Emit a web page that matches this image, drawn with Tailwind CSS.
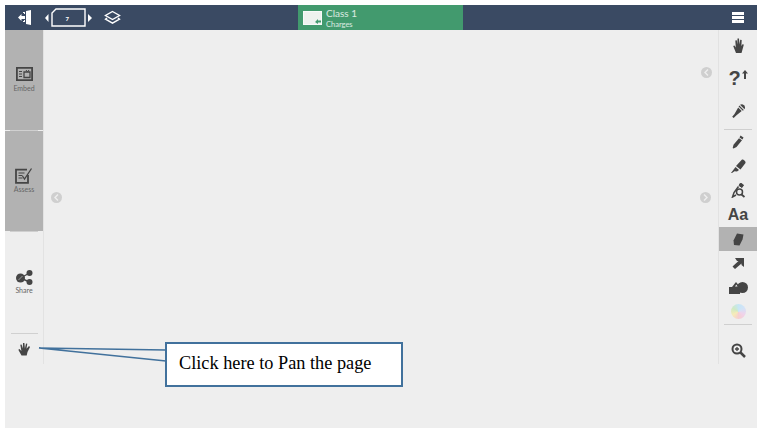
<!DOCTYPE html>
<html>
<head>
    <meta charset="utf-8">
    <script src="https://cdn.jsdelivr.net/npm/@tailwindcss/browser@4"></script>
</head>
<body class="bg-white">
    <div class="relative w-[763px] h-[436px] pt-[5px] pl-[5px] pr-[6px] pb-[8px] overflow-hidden font-['Lato','Noto_Sans',sans-serif]">
        <div class="flex flex-col h-full bg-[#eeeeee]">
            <!-- top bar -->
            <div class="flex items-center h-[25px] bg-[#3a4a63] shrink-0 relative">
                <svg class="ml-[13px] w-[14px] h-[15px]" viewBox="0 0 14 15" fill="#fff">
                    <path d="M8 1l5-1v15l-5-1z"/>
                    <path d="M0 7.500l3.500-3.500v2H7v3H3.500v2z"/>
                    <path d="M5 2h2v2H6v-1H5zM5 12h2v-2H6v1H5z"/>
                </svg>
                <svg class="ml-[13px] w-[47px] h-[20px] mt-[1px]" viewBox="0 0 47 20">
                    <path d="M0 10l3.500-4v8z" fill="#fff"/>
                    <path d="M11 1h29v17H7V5z" fill="none" stroke="#fff" stroke-width="1.400"/>
                    <path d="M43 6l4 4-4 4z" fill="#fff"/>
                    <text x="20.500" y="12.500" font-size="6" font-weight="700" fill="#fff" font-family="Lato">7</text>
                </svg>
                <svg class="ml-[12px] w-[17px] h-[15px]" viewBox="0 0 17 15" fill="none" stroke="#fff" stroke-width="1.400">
                    <path d="M8.500 1.500L15.500 5.500 8.500 9.500 1.500 5.500z"/>
                    <path d="M3 8l-1.500 1.200 7 4 7-4L14 8"/>
                </svg>
                <div class="absolute left-[293px] top-0 w-[165px] h-[25px] bg-[#429a6e] flex items-center text-white/80">
                    <div class="ml-[5px] w-[19px] h-[14px] bg-[#eef2ef] border border-white/60 relative">
                        <svg class="absolute right-0 bottom-0 w-[6px] h-[5px]" viewBox="0 0 6 5" fill="#429a6e"><path d="M0 3l3-3v1.500h3v2H3V5z"/></svg>
                    </div>
                    <div class="ml-[4px] flex flex-col">
                        <span class="text-[10px] leading-[12px]">Class 1</span>
                        <span class="text-[7.500px] leading-[9px] mt-[1px]">Charges</span>
                    </div>
                </div>
                <svg class="ml-auto mr-[13px] w-[12px] h-[11px]" viewBox="0 0 12 11" fill="#fff">
                    <path d="M0 0h12v3H0zM0 4h12v3H0zM0 8h12v3H0z"/>
                </svg>
            </div>

            <div class="flex h-[334px] shrink-0">
                <!-- left tools -->
                <div class="flex flex-col w-[38px] shrink-0 border-r border-[#e2e2e2] box-content">
                    <div class="h-[100px] bg-[#b2b2b2] flex flex-col items-center pt-[37px]">
                        <svg class="w-[17px] h-[14px]" viewBox="0 0 17 14" fill="none" stroke="#454545">
                            <path d="M.9.900h15.200v12.200H.9z" stroke-width="1.800"/>
                            <path d="M3 4.500h3M3 7h3M3 9.500h3" stroke-width="1"/>
                            <path d="M8 5h6v5.500H8z" stroke-width="1.300"/>
                            <path d="M10 3l1.500 2 1.500-2" stroke-width="1"/>
                        </svg>
                        <span class="text-[7px] leading-[9px] mt-[2.500px] text-[#666666]">Embed</span>
                    </div>
                    <div class="h-px mx-[5px] bg-[#d0d0d0] shrink-0"></div>
                    <div class="h-[100px] bg-[#b2b2b2] flex flex-col items-center pt-[37px]">
                        <svg class="w-[18px] h-[16px]" viewBox="0 0 18 16" fill="none" stroke="#454545">
                            <path d="M13 7v7.800H1V1.700h11" stroke-width="1.800"/>
                            <path d="M3.500 5h6M3.500 7.500h4M3.500 10h4" stroke-width="1"/>
                            <path d="M7.500 8l2 3L16.500 .5" stroke-width="1.300"/>
                        </svg>
                        <span class="text-[7px] leading-[9px] mt-[1px] text-[#666666]">Assess</span>
                    </div>
                    <div class="h-px mx-[5px] bg-[#cfcfcf] shrink-0"></div>
                    <div class="h-[101px] flex flex-col items-center pt-[38px]">
                        <svg class="w-[17px] h-[15px]" viewBox="0 0 17 15" fill="#454545">
                            <circle cx="4.500" cy="8" r="4.500"/>
                            <circle cx="13.500" cy="3" r="3"/>
                            <circle cx="13.500" cy="12" r="3"/>
                            <path d="M4.500 8l9-5M4.500 8l9 4" stroke="#454545" stroke-width="1.400"/>
                            <path d="M2.500 10l4-4" stroke="#9a9a9a" stroke-width="1"/>
                        </svg>
                        <span class="text-[7px] leading-[9px] mt-[1px] text-[#666666]">Share</span>
                    </div>
                    <div class="h-px ml-[6px] mr-[5px] bg-[#d0d0d0] shrink-0"></div>
                    <div class="flex-1 flex justify-center pt-[8px]">
                        <svg class="w-[13px] h-[14px]" viewBox="0 0 13 14" fill="#454545">
                            <path d="M3.500 13.500L.3 7.800l1.200-.7L3.400 9 2.300 2.800l1.300-.3 1.200 4L5 1l1.400-.1.500 5.500L8 1.500l1.300.3-.8 5 2.500-2.700 1 .8L9.500 10l-.8 3.500z"/>
                        </svg>
                    </div>
                </div>

                <!-- canvas -->
                <div class="flex-1 relative">
                    <span class="absolute left-[7px] top-[162px] w-[11px] h-[11px] rounded-full bg-[#cfcfcf] flex items-center justify-center">
                        <svg class="w-[5px] h-[7px]" viewBox="0 0 5 7" fill="none" stroke="#eeeeee" stroke-width="1.500"><path d="M4 .5L1 3.500 4 6.500"/></svg>
                    </span>
                    <span class="absolute right-[6px] top-[37px] w-[11px] h-[11px] rounded-full bg-[#cfcfcf] flex items-center justify-center">
                        <svg class="w-[5px] h-[7px]" viewBox="0 0 5 7" fill="none" stroke="#eeeeee" stroke-width="1.500"><path d="M4 .5L1 3.500 4 6.500"/></svg>
                    </span>
                    <span class="absolute right-[7px] top-[162px] w-[11px] h-[11px] rounded-full bg-[#cfcfcf] flex items-center justify-center">
                        <svg class="w-[5px] h-[7px]" viewBox="0 0 5 7" fill="none" stroke="#eeeeee" stroke-width="1.500"><path d="M1 .5L4 3.500 1 6.500"/></svg>
                    </span>
                </div>

                <!-- right tools -->
                <div class="flex flex-col items-center w-[39px] shrink-0 border-l border-[#e2e2e2] text-[#454545]">
                    <svg class="mt-[8px] w-[11px] h-[15px]" viewBox="0 0 11 15" fill="#454545">
                        <path d="M3 15L.2 8l1.300-.6L2.800 9.500 2.300 2.500 3.800 2.300 4.300 6.500 4.500.5 6 .5 6.500 6.500 7.200 1.700 8.700 1.900 8.400 8 9.800 6l1 .7L9.500 11.500 8.500 15z"/>
                    </svg>
                    <div class="mt-[14px] h-[22px] flex items-start">
                        <span class="font-['Liberation_Sans',sans-serif] font-bold text-[20px] leading-[22px]">?</span>
                        <svg class="w-[6px] h-[9px] mt-[3px] ml-[1px]" viewBox="0 0 6 9" fill="#454545"><path d="M3 0l3 3.500H4V9H2V3.500H0z"/></svg>
                    </div>
                    <svg class="mt-[15px] w-[13px] h-[14px]" viewBox="0 0 13 14" fill="#454545">
                        <path d="M8 .7a3.300 3.300 0 0 1 4.500 4.500z"/>
                        <path d="M7.300 1.500l4.500 4.500-1 .7-4.200-4.200z"/>
                        <path d="M6.200 3.500l3.500 3.500-5.500 4.500-2.500 2.500-1.500-1.300 2.300-2.700z"/>
                    </svg>
                    <div class="mt-[11px] h-px w-[28px] bg-[#cfcfcf]"></div>
                    <svg class="mt-[5px] w-[12px] h-[14px]" viewBox="0 0 12 14" fill="#454545">
                        <path d="M8.500 0.500L11.500 2.500 10.500 4.500 7.500 2.500zM7 3.300l3 2-5.500 6.700-3 1.500-.8-.6.800-3.200z"/>
                    </svg>
                    <svg class="mt-[10px] w-[15px] h-[14px]" viewBox="0 0 15 14" fill="#454545">
                        <path d="M11 0.500c2 0 4 2 3.500 3.500l-5 6.500-4.500-3.500zM4.500 8l3.500 3-2 1.500-2.500-.3L1 14H0l3-4z"/>
                    </svg>
                    <svg class="mt-[10px] w-[15px] h-[15px]" viewBox="0 0 15 15" fill="none" stroke="#454545">
                        <path d="M9.500 0L12.500 2 11 4.500 8 2.500z" fill="#454545"/>
                        <path d="M7.500 3.500L3 9.500 1.500 14 5 12" stroke-width="1.500"/>
                        <circle cx="8.500" cy="9" r="3" stroke-width="1.500"/>
                        <path d="M10.500 11.500l3 2.500" stroke-width="1.800"/>
                    </svg>
                    <span class="mt-[8px] font-['Liberation_Sans',sans-serif] font-bold text-[16px] leading-[17px]">Aa</span>
                    <div class="mt-[4px] h-[24px] w-full bg-[#b2b2b2] flex items-center justify-center">
                        <svg class="w-[11px] h-[13px]" viewBox="0 0 11 13" fill="#454545">
                            <path d="M4 .5L10.500 1.500 9.500 6.500 6.500 12.500 1 12 .5 7.500z"/>
                        </svg>
                    </div>
                    <svg class="mt-[7px] w-[12px] h-[11px]" viewBox="0 0 12 11" fill="#454545">
                        <path d="M3 0H12V9L9.500 7V5.500L3 11 .5 8.500 6.500 3H5z"/>
                    </svg>
                    <svg class="mt-[13px] w-[19px] h-[12px]" viewBox="0 0 19 12" fill="#454545">
                        <path d="M0 5h11v7H0z"/>
                        <path d="M7 0l4 5H3z"/>
                        <circle cx="13.500" cy="5.500" r="5.500"/>
                        <path d="M6 4.500L7.300 2.500 8.600 4.500z" fill="#eeeeee"/>
                    </svg>
                    <div class="mt-[10px] w-[15px] h-[15px] rounded-full bg-[conic-gradient(#c6e6f5,#d3e3f7,#f0d3ea,#f6cfd0,#f6ecb9,#cfeac4,#c6e6f5)]"></div>
                    <div class="mt-[5px] h-px w-[28px] bg-[#cfcfcf]"></div>
                    <svg class="mt-[18px] w-[15px] h-[15px]" viewBox="0 0 15 15" fill="none" stroke="#454545">
                        <circle cx="6" cy="6" r="4.500" stroke-width="2"/>
                        <path d="M9.500 9.500L14 14" stroke-width="2.500"/>
                        <path d="M4 6h4M6 4v4" stroke-width="1.300"/>
                    </svg>
                </div>
            </div>
        </div>

        <!-- callout -->
        <svg class="absolute left-[38px] top-[345px] w-[130px] h-[20px]" viewBox="0 0 130 20" fill="none">
            <path d="M128 5L1 3 128 16" fill="#eeeeee" stroke="#41719c" stroke-width="1.500"/>
        </svg>
        <div class="absolute left-[165px] top-[342px] w-[238px] h-[45px] bg-white border-2 border-[#41719c] flex items-center pl-[12px] pb-[2px] font-['Liberation_Serif',serif] text-[18.300px] text-black">
            Click here to Pan the page
        </div>
    </div>
</body>
</html>
